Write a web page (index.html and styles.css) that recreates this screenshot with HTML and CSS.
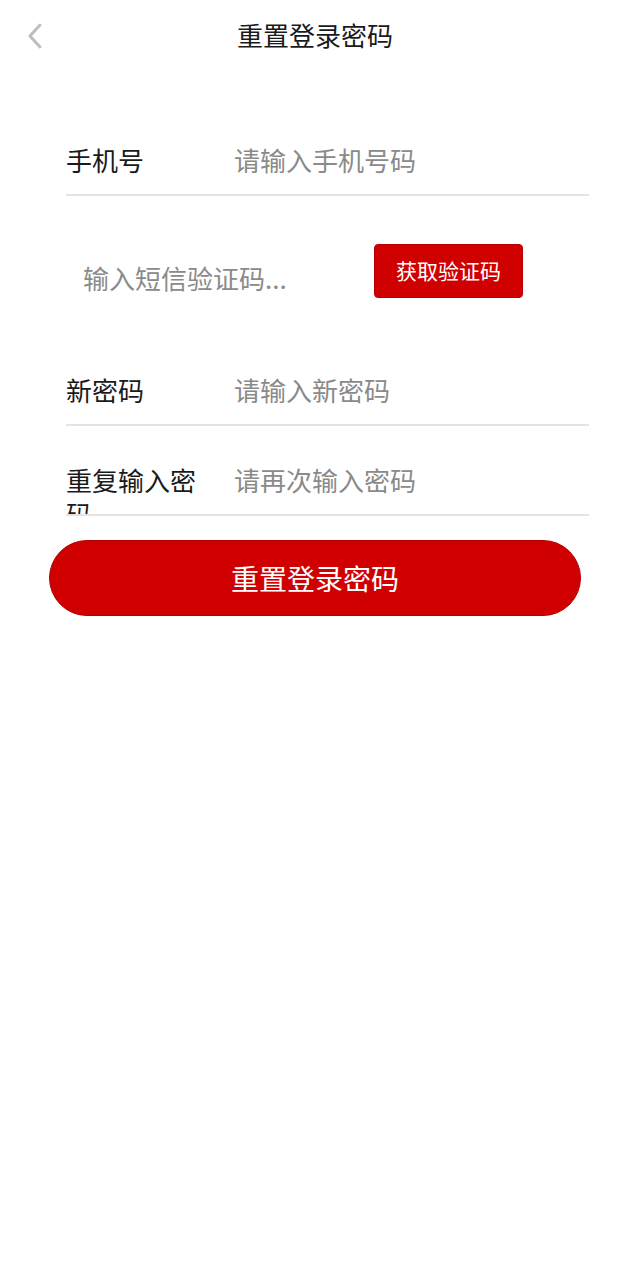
FILE: index.html
```html
<!DOCTYPE html>
<html lang="zh-CN">
<head>
    <meta charset="UTF-8">
    <meta name="viewport" content="width=device-width, initial-scale=1.0">
    <title>重置登录密码</title>
    <link rel="stylesheet" href="styles.css">
</head>
<body>

<div class="header">
    <a class="back" href="#">
        <svg width="20" height="28" viewBox="0 0 20 28"><path d="M14 3 L4 14 L14 25" fill="none" stroke="#bdbdbd" stroke-width="3" stroke-linecap="round" stroke-linejoin="round"/></svg>
    </a>
    <h1>重置登录密码</h1>
</div>

<div class="form">
    <div class="row">
        <label for="phone">手机号</label>
        <input type="text" id="phone" placeholder="请输入手机号码">
    </div>

    <div class="code-row">
        <input type="text" id="code" placeholder="输入短信验证码...">
        <button class="code-btn">获取验证码</button>
    </div>

    <div class="row row-pwd">
        <label for="pwd">新密码</label>
        <input type="password" id="pwd" placeholder="请输入新密码">
    </div>

    <div class="row row-repeat">
        <label for="pwd2">重复输入密码</label>
        <input type="password" id="pwd2" placeholder="请再次输入密码">
    </div>

    <button class="submit">重置登录密码</button>
</div>

</body>
</html>
```

FILE: styles.css
```css
body {
    margin: 0;
    background: #fff;
    font-family: "Noto Sans CJK SC", "Noto Sans", sans-serif;
    color: #1a1a1a;
}
.header {
    height: 72px;
    display: flex;
    align-items: center;
    justify-content: center;
    position: relative;
}
.back {
    position: absolute;
    left: 26px;
    top: 22px;
    display: block;
    width: 20px;
    height: 28px;
}
.header h1 {
    margin: -4px 0 0;
    font-size: 26px;
    font-weight: 400;
    color: #1a1a1a;
}
.form {
    padding: 58px 41px 0 66px;
}
input {
    border: none;
    outline: none;
    background: transparent;
    font-family: inherit;
    font-size: 26px;
    color: #333;
    padding: 0;
    flex: 1;
    min-width: 0;
}
input::placeholder {
    color: #8a8a8a;
}
.row {
    height: 66px;
    display: flex;
    align-items: flex-start;
    border-bottom: 2px solid #e4e4e4;
    overflow: hidden;
    box-sizing: border-box;
}
.row label {
    width: 168px;
    flex: none;
    padding-right: 30px;
    box-sizing: border-box;
    font-size: 26px;
    line-height: 34px;
    padding-top: 13px;
    color: #1a1a1a;
}
.row input {
    height: 36px;
    line-height: 36px;
    margin-top: 12px;
}
.code-row {
    display: flex;
    align-items: center;
    height: 54px;
    margin-top: 48px;
    padding-left: 17px;
    padding-right: 66px;
}
.code-row input {
    margin-top: 12px;
}
.code-btn {
    flex: none;
    width: 149px;
    height: 54px;
    border: 1px solid #b80000;
    border-radius: 4px;
    background: #d10000;
    color: #fff;
    font-family: inherit;
    font-size: 21px;
    padding: 0 0 2px;
}
.row-pwd {
    margin-top: 62px;
}
.row-repeat {
    margin-top: 24px;
}
.submit {
    display: block;
    width: 532px;
    height: 76px;
    margin: 24px 0 0 -17px;
    border: 1px solid #b00000;
    border-radius: 38px;
    background: #d10000;
    color: #fff;
    font-family: inherit;
    font-size: 28px;
    padding: 0;
}
```
